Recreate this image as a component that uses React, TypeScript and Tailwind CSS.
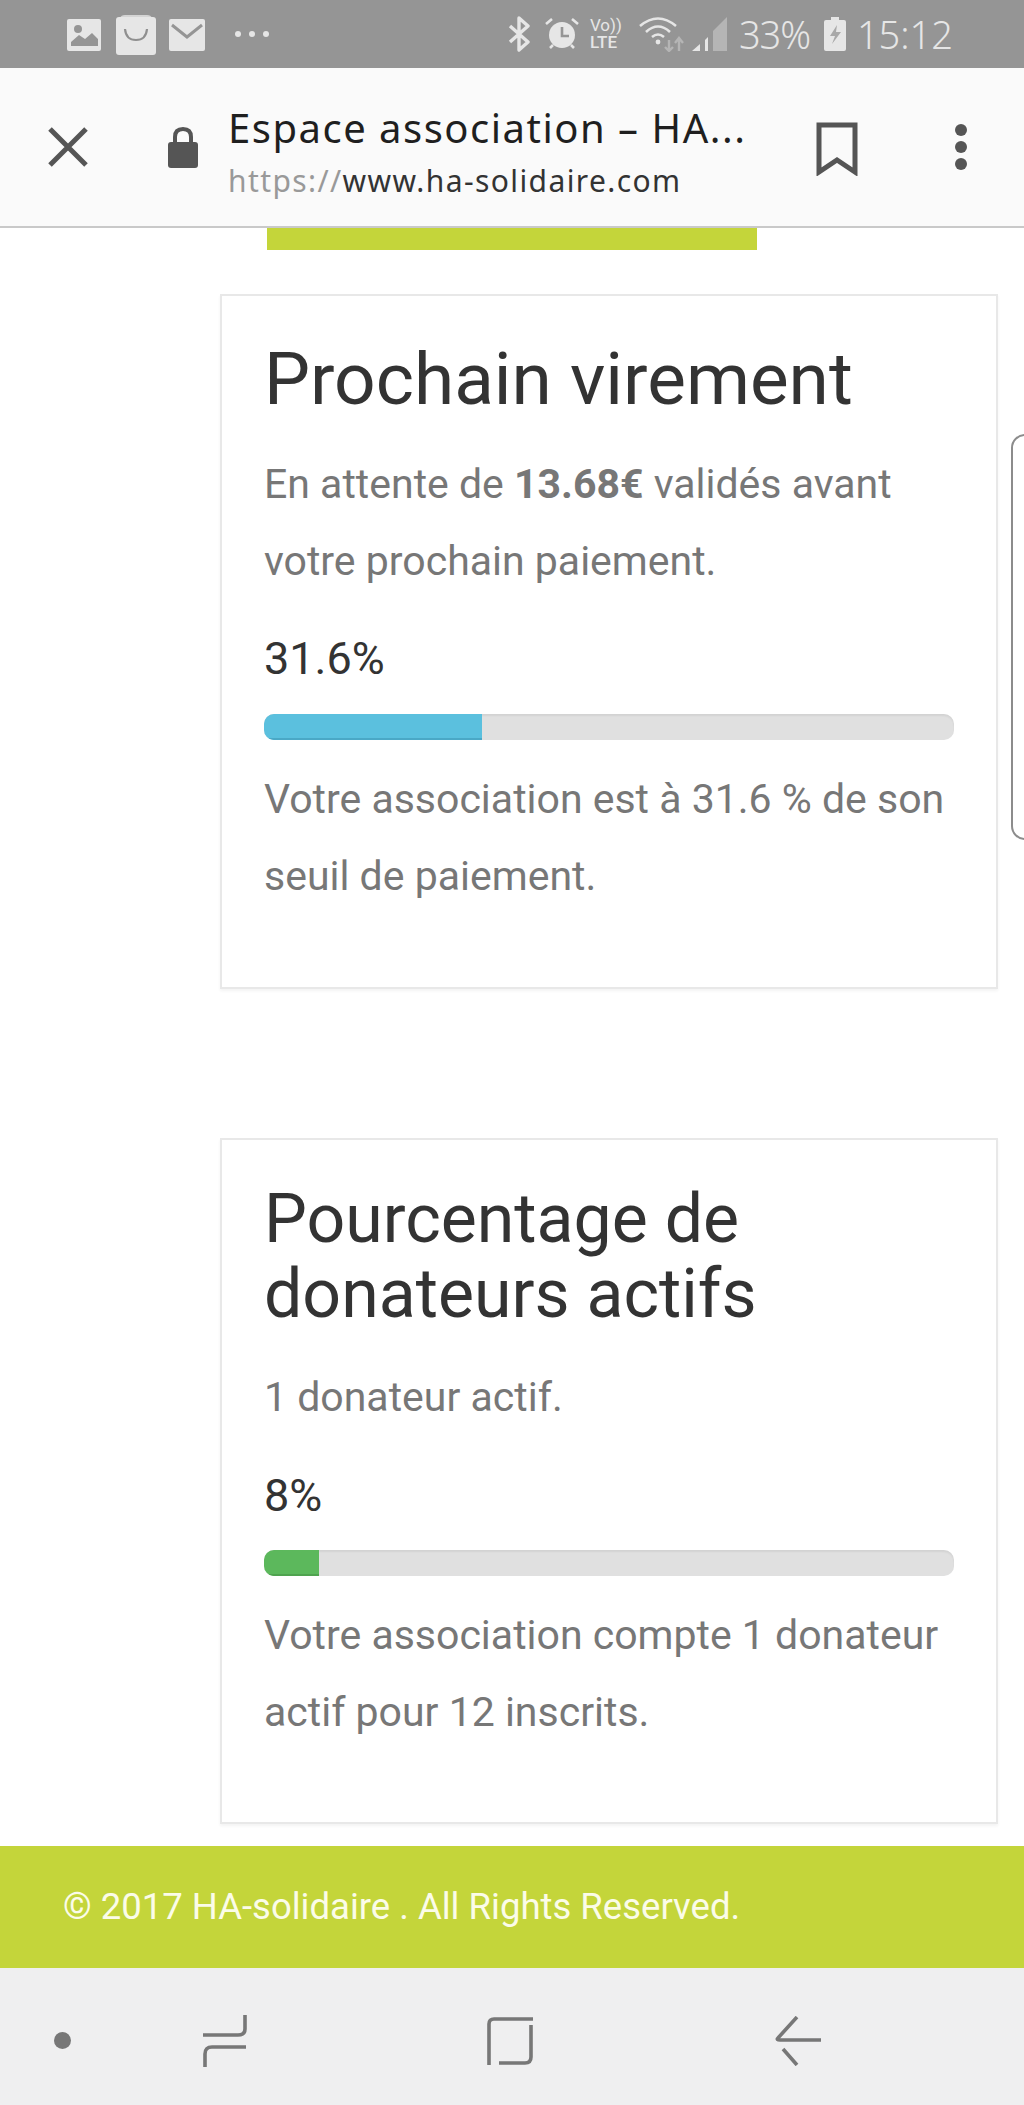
const hand = "font-['Noto_Sans',sans-serif]";

function StatusLeft() {
  return (
    <div className="flex items-center">
      <svg width="34" height="32" viewBox="0 0 34 32" className="mt-[2px]">
        <rect width="34" height="32" rx="2" fill="#e6e6e6" />
        <circle cx="11" cy="10" r="4" fill="#959595" />
        <path d="M4 23 L12 16 L18 20 L25 14 L31 20 V27 H4 Z" fill="#959595" />
      </svg>
      <svg width="40" height="41" viewBox="0 0 40 41" className="ml-[15px]">
        <path d="M4 4 Q5 1 9 1 H31 Q35 1 36 4 V6 H4 Z" fill="#d4d4d4" />
        <rect y="3" width="40" height="38" rx="3" fill="#e6e6e6" />
        <path d="M9 15 Q10 26 20 26 Q30 26 31 15" fill="none" stroke="#8f8f8f" strokeWidth="2.2" />
      </svg>
      <svg width="36" height="32" viewBox="0 0 36 32" className="ml-[13px] mt-[2px]">
        <rect width="36" height="32" rx="2" fill="#e6e6e6" />
        <path d="M3 6 L18 18 L33 6" fill="none" stroke="#959595" strokeWidth="3" />
      </svg>
      <div className="ml-[30px] flex gap-[8px]">
        <span className="h-[6px] w-[6px] rounded-full bg-[#e6e6e6]" />
        <span className="h-[6px] w-[6px] rounded-full bg-[#e6e6e6]" />
        <span className="h-[6px] w-[6px] rounded-full bg-[#e6e6e6]" />
      </div>
    </div>
  );
}

function StatusRight() {
  return (
    <div className="flex items-center text-[#e6e6e6]">
      <svg width="23" height="36" viewBox="0 0 23 36">
        <path d="M2 10 L20 26 L11 34 V2 L20 10 L2 26" fill="none" stroke="#e6e6e6" strokeWidth="3.4" strokeLinejoin="round" />
      </svg>
      <svg width="34" height="34" viewBox="0 0 34 34" className="ml-[14px]">
        <circle cx="17" cy="18" r="13" fill="#e6e6e6" />
        <path d="M17 10 V19 H24" fill="none" stroke="#959595" strokeWidth="2.6" />
        <path d="M1 7 L7 2 M33 7 L27 2 M5 31 L8 28 M29 31 L26 28" stroke="#e6e6e6" strokeWidth="2.6" />
      </svg>
      <div className="ml-[11px] flex w-[35px] flex-col font-['Roboto',sans-serif] text-[17px] leading-[17px]">
        <span>Vo))</span>
        <span className="font-medium">LTE</span>
      </div>
      <svg width="52" height="36" viewBox="0 0 52 36" className="ml-[14px]">
        <path d="M1 10 Q19 -5 37 10" fill="none" stroke="#e6e6e6" strokeWidth="2.6" />
        <path d="M7 16 Q19 5 31 16" fill="none" stroke="#e6e6e6" strokeWidth="2.6" />
        <path d="M13 21 Q19 16 25 21" fill="none" stroke="#e6e6e6" strokeWidth="2.6" />
        <circle cx="19" cy="26" r="2.4" fill="#e6e6e6" />
        <path d="M30 24 V35 M26 31 L30 35 L34 31 M40 35 V22 M36 27 L40 22 L44 27" fill="none" stroke="#b5b5b5" strokeWidth="2.4" />
      </svg>
      <svg width="36" height="34" viewBox="0 0 36 34" className="ml-[1px]">
        <path d="M0 34 L8 27 V34 Z" fill="#e6e6e6" />
        <path d="M13 23 L16 20 V34 H13 Z" fill="#e6e6e6" />
        <path d="M21 14 L35 0 V34 H21 Z" fill="#b5b5b5" />
      </svg>
      <span className={`ml-[11px] w-[74px] ${hand} text-[38px] font-light leading-[36px] tracking-[-1px]`}>33%</span>
      <svg width="22" height="34" viewBox="0 0 22 34" className="ml-[11px]">
        <path d="M7 0 H15 V3 H20 Q22 3 22 5 V32 Q22 34 20 34 H2 Q0 34 0 32 V5 Q0 3 2 3 H7 Z" fill="#e6e6e6" />
        <path d="M13 8 L6 19 H11 L8 27 L17 15 H12 Z" fill="#a8a8a8" />
      </svg>
      <span className={`ml-[11px] ${hand} text-[38px] font-light leading-[36px]`}>15:12</span>
    </div>
  );
}

function ChromeBar() {
  return (
    <div className="flex h-[160px] items-center border-b-2 border-[#c9c9c9] bg-[#fafafa]">
      <svg width="42" height="42" viewBox="0 0 42 42" className="ml-[47px]">
        <path d="M3 3 L39 39 M39 3 L3 39" stroke="#555" strokeWidth="5" />
      </svg>
      <svg width="32" height="42" viewBox="0 0 32 42" className="ml-[78px]">
        <path d="M8 18 V11 Q8 3 16 3 Q24 3 24 11 V18" fill="none" stroke="#555" strokeWidth="4" />
        <rect x="1" y="16" width="30" height="26" rx="3" fill="#555" />
      </svg>
      <div className="ml-[29px] mt-[9px] flex w-[588px] flex-col">
        <span className={`${hand} whitespace-nowrap text-[40px] leading-[50px] tracking-[1.5px] text-[#1f1f1f]`}>Espace association – HA...</span>
        <span className={`${hand} mt-[8px] whitespace-nowrap text-[30px] leading-[40px] tracking-[1.4px] text-[#333]`}>
          <span className="text-[#999]">https://</span>www.ha-solidaire.com
        </span>
      </div>
      <svg width="42" height="54" viewBox="0 0 42 54" className="mt-[4px]">
        <path d="M3 3 H39 V50 L21 38 L3 50 Z" fill="none" stroke="#555" strokeWidth="5" />
      </svg>
      <div className="ml-[97px] flex flex-col gap-[5px]">
        <span className="h-[12px] w-[12px] rounded-full bg-[#555]" />
        <span className="h-[12px] w-[12px] rounded-full bg-[#555]" />
        <span className="h-[12px] w-[12px] rounded-full bg-[#555]" />
      </div>
    </div>
  );
}

function Progress({ value, color }: { value: number; color: string }) {
  return (
    <div className="h-[26px] w-full overflow-hidden rounded-[10px] bg-[#e0e0e0] shadow-[inset_0_2px_2px_rgba(0,0,0,0.06)]">
      <div
        className={`h-full border-b-[2px] ${color}`}
        style={{ width: `${value}%` }}
      />
    </div>
  );
}

export default function App() {
  return (
    <div className="relative flex h-[2105px] w-[1024px] flex-col overflow-hidden bg-white font-['Roboto',sans-serif]">
      <div className="flex h-[68px] items-center justify-between bg-[#959595] pl-[67px] pr-[71px]">
        <StatusLeft />
        <StatusRight />
      </div>

      <ChromeBar />

      <main className="flex flex-1 flex-col pl-[220px] pr-[26px]">
        <div className="ml-[47px] h-[22px] w-[490px] bg-[#c4d53a]" />

        <section className="mt-[44px] h-[695px] border-2 border-[#e8e8e8] px-[42px] pt-[46px] shadow-[0_2px_3px_rgba(0,0,0,0.05)]">
          <h2 className="text-[73px] leading-[75px] text-[#333]">Prochain virement</h2>
          <p className="mt-[29px] text-[41px] leading-[77px] text-[#777]">
            En attente de <b>13.68€</b> validés avant votre prochain paiement.
          </p>
          <div className="mt-[29px] text-[45px] leading-[60px] text-[#333]">31.6%</div>
          <div className="mt-[25px]">
            <Progress value={31.6} color="border-[#4aa8c6] bg-[#5bc0de]" />
          </div>
          <p className="mt-[21px] text-[41px] leading-[77px] text-[#777]">
            Votre association est à 31.6 % de son seuil de paiement.
          </p>
        </section>

        <section className="mt-[149px] h-[686px] border-2 border-[#e8e8e8] px-[42px] pt-[42px] shadow-[0_2px_3px_rgba(0,0,0,0.05)]">
          <h2 className="text-[68px] leading-[75px] text-[#333]">Pourcentage de donateurs actifs</h2>
          <p className="mt-[27px] text-[41px] leading-[77px] text-[#777]">1 donateur actif.</p>
          <div className="mt-[30px] text-[45px] leading-[60px] text-[#333]">8%</div>
          <div className="mt-[24px]">
            <Progress value={8} color="border-[#4fa34f] bg-[#5cb85c]" />
          </div>
          <p className="mt-[21px] text-[41px] leading-[77px] text-[#777]">
            Votre association compte 1 donateur actif pour 12 inscrits.
          </p>
        </section>
      </main>

      {/* edge panel handle */}
      <div className="absolute left-[1011px] top-[434px] h-[406px] w-[30px] rounded-[14px] border-2 border-[#8c8c8c] bg-white" />

      <footer className="flex h-[122px] items-center bg-[#c4d53a] pl-[63px] text-[36.5px] text-[#fbfce8]">
        © 2017 HA-solidaire . All Rights Reserved.
      </footer>

      <div className="flex h-[137px] items-center bg-[#efeff0] pl-[54px] pt-[8px]">
        <span className="h-[17px] w-[17px] rounded-full bg-[#777]" />
        <svg width="46" height="52" viewBox="0 0 46 52" className="ml-[131px]">
          <path d="M43 0 V14 Q43 20 36 20 H1 M44 32 H10 Q3 32 3 39 V52" fill="none" stroke="#777" strokeWidth="3.6" />
        </svg>
        <svg width="46" height="48" viewBox="0 0 46 48" className="ml-[239px]">
          <path d="M2 48 V7 Q2 2 7 2 H46 M44 8 V40 Q44 46 38 46 H12" fill="none" stroke="#777" strokeWidth="3.6" />
        </svg>
        <svg width="46" height="50" viewBox="0 0 46 50" className="ml-[242px]">
          <path d="M22 1 L3 22 Q1 24 5 24 H46 M8 33 L22 49" fill="none" stroke="#777" strokeWidth="3.6" />
        </svg>
      </div>
    </div>
  );
}
